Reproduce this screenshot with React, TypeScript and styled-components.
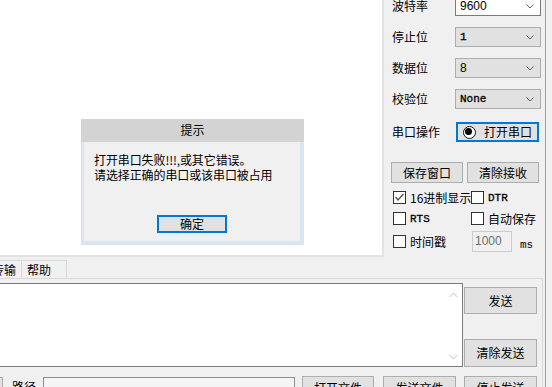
import React from 'react'
import styled, { createGlobalStyle } from 'styled-components'

const GlobalStyle = createGlobalStyle`
  html, body {
    margin: 0;
    padding: 0;
    background: #f0f0f0;
  }
  body {
    font-family: "Noto Sans CJK SC", "Liberation Sans", sans-serif;
    font-size: 12px;
    color: #000;
  }
`

const Chevron: React.FC = () => (
  <svg width="8" height="5" viewBox="0 0 8 5">
    <polyline points="0.5,0.5 4,4 7.5,0.5" fill="none" stroke="#606060" strokeWidth="1" />
  </svg>
)

interface ComboProps {
  value: string
  white?: boolean
  mono?: boolean
}

const Combo: React.FC<ComboProps> = ({ value, white, mono }) => (
  <StyledCombo $white={white}>
    <ComboText $mono={mono}>{value}</ComboText>
    <Chevron />
  </StyledCombo>
)

interface CheckProps {
  label: string
  checked?: boolean
  mono?: boolean
}

const Check: React.FC<CheckProps> = ({ label, checked, mono }) => (
  <StyledCheck>
    <CheckBox>
      {checked && (
        <svg width="11" height="11" viewBox="0 0 11 11">
          <polyline points="1.5,5 4,8 9.5,2" fill="none" stroke="#555" strokeWidth="1.4" />
        </svg>
      )}
    </CheckBox>
    <CheckLabel $mono={mono}>{label}</CheckLabel>
  </StyledCheck>
)

const App: React.FC = () => {
  return (
    <>
      <GlobalStyle />
      <Window>
        <TopSection>
          <ReceiveBox />
          <RightPanel>
            <FieldRow>
              <FieldLabel>波特率</FieldLabel>
              <Combo value="9600" white />
            </FieldRow>
            <FieldRow>
              <FieldLabel>停止位</FieldLabel>
              <Combo value="1" mono />
            </FieldRow>
            <FieldRow>
              <FieldLabel>数据位</FieldLabel>
              <Combo value="8" />
            </FieldRow>
            <FieldRow>
              <FieldLabel>校验位</FieldLabel>
              <Combo value="None" mono />
            </FieldRow>
            <OpRow>
              <FieldLabel $wide>串口操作</FieldLabel>
              <FocusButton $width={83} $height={20}>
                <RadioIcon />
                <span>打开串口</span>
              </FocusButton>
            </OpRow>
            <SaveRow>
              <PlainButton $width={72} $height={21}>保存窗口</PlainButton>
              <PlainButton $width={72} $height={21}>清除接收</PlainButton>
            </SaveRow>
            <CheckRow>
              <CheckCol>
                <Check label="16进制显示" checked />
              </CheckCol>
              <Check label="DTR" mono />
            </CheckRow>
            <CheckRow>
              <CheckCol>
                <Check label="RTS" mono />
              </CheckCol>
              <Check label="自动保存" />
            </CheckRow>
            <CheckRow $last>
              <CheckCol>
                <Check label="时间戳" />
              </CheckCol>
              <IntervalInput>1000</IntervalInput>
              <Unit>ms</Unit>
            </CheckRow>
          </RightPanel>
        </TopSection>

        <TabStrip>
          <Tab $partial>传输</Tab>
          <Tab>帮助</Tab>
        </TabStrip>
        <TabPanel>
          <SendRow>
            <SendBox>
              <ScrollArrows>
                <svg width="9" height="6" viewBox="0 0 9 6">
                  <polyline points="0.5,5 4.5,1 8.5,5" fill="none" stroke="#bdbdbd" strokeWidth="1" />
                </svg>
                <svg width="9" height="6" viewBox="0 0 9 6">
                  <polyline points="0.5,1 4.5,5 8.5,1" fill="none" stroke="#bdbdbd" strokeWidth="1" />
                </svg>
              </ScrollArrows>
            </SendBox>
            <SendButtons>
              <PlainButton $width={73} $height={27}>发送</PlainButton>
              <PlainButton $width={73} $height={28}>清除发送</PlainButton>
            </SendButtons>
          </SendRow>
          <FileRow>
            <PartialButton />
            <PathLabel>路径</PathLabel>
            <PathInput />
            <PlainButton $width={72} $height={24}>打开文件</PlainButton>
            <PlainButton $width={73} $height={24}>发送文件</PlainButton>
            <PlainButton $width={73} $height={24}>停止发送</PlainButton>
          </FileRow>
        </TabPanel>

        <Dialog>
          <DialogTitle>提示</DialogTitle>
          <DialogBody>
            <DialogText>
              <DialogLine>打开串口失败!!!,或其它错误。</DialogLine>
              <DialogLine>请选择正确的串口或该串口被占用</DialogLine>
            </DialogText>
            <FocusButton $width={70} $height={18}>确定</FocusButton>
          </DialogBody>
        </Dialog>
      </Window>
    </>
  )
}

const Window = styled.div`
  position: relative;
  width: 546px;
  height: 387px;
  overflow: hidden;
  box-sizing: border-box;
  background: #f0f0f0;
  border-right: 1px solid #a0a0a0;
`

const TopSection = styled.div`
  display: flex;
  height: 257px;
`

const ReceiveBox = styled.div`
  width: 384px;
  height: 257px;
  box-sizing: border-box;
  background: #fff;
  border-right: 2px solid #e3e3e3;
  border-bottom: 2px solid #e3e3e3;
`

const RightPanel = styled.div`
  display: flex;
  flex-direction: column;
  margin-top: -4px;
  padding-left: 8px;
`

const FieldRow = styled.div`
  display: flex;
  align-items: center;
  height: 20px;
  margin-bottom: 11px;
`

const FieldLabel = styled.div<{ $wide?: boolean }>`
  width: ${(p) => (p.$wide ? 64 : 63)}px;
  line-height: 20px;
`

const StyledCombo = styled.div<{ $white?: boolean }>`
  display: flex;
  align-items: center;
  justify-content: space-between;
  width: 86px;
  height: 20px;
  box-sizing: border-box;
  padding: 0 6px 0 4px;
  background: ${(p) => (p.$white ? '#fff' : '#e1e1e1')};
  border: 1px solid ${(p) => (p.$white ? '#7a7a7a' : '#adadad')};
`

const ComboText = styled.span<{ $mono?: boolean }>`
  font-family: ${(p) =>
    p.$mono ? '"Liberation Mono", monospace' : '"Liberation Sans", "Noto Sans CJK SC", sans-serif'};
  font-size: ${(p) => (p.$mono ? 11 : 12)}px;
  font-weight: normal;
  -webkit-text-stroke: ${(p) => (p.$mono ? '0.3px #000' : '0')};
  line-height: 18px;
`

const OpRow = styled.div`
  display: flex;
  align-items: center;
  height: 20px;
  margin-top: 2px;
`

const FocusButton = styled.div<{ $width: number; $height: number }>`
  display: flex;
  align-items: center;
  justify-content: center;
  gap: 8px;
  width: ${(p) => p.$width}px;
  height: ${(p) => p.$height}px;
  box-sizing: border-box;
  background: #e1e1e1;
  border: 2px solid #0078d7;
  line-height: 14px;
`

const RadioIcon = styled.span`
  position: relative;
  flex: none;
  width: 13px;
  height: 13px;
  box-sizing: border-box;
  border: 1.5px solid #111;
  border-radius: 50%;
  background: #fff;
  &::after {
    content: '';
    position: absolute;
    left: 1.5px;
    top: 1.5px;
    width: 7px;
    height: 7px;
    border-radius: 50%;
    background: #000;
  }
`

const PlainButton = styled.div<{ $width: number; $height: number }>`
  display: flex;
  align-items: center;
  justify-content: center;
  flex: none;
  width: ${(p) => p.$width}px;
  height: ${(p) => p.$height}px;
  box-sizing: border-box;
  background: #e1e1e1;
  border: 1px solid #adadad;
  line-height: 14px;
`

const SaveRow = styled.div`
  display: flex;
  gap: 4px;
  margin-top: 20px;
  margin-left: -1px;
`

const CheckRow = styled.div<{ $last?: boolean }>`
  display: flex;
  align-items: center;
  height: ${(p) => (p.$last ? 21 : 13)}px;
  margin-top: ${(p) => (p.$last ? 6 : 8)}px;
  margin-left: 1px;
`

const CheckCol = styled.div`
  width: 78px;
`

const StyledCheck = styled.div`
  display: flex;
  align-items: center;
  gap: 4px;
  white-space: nowrap;
`

const CheckBox = styled.div`
  display: flex;
  align-items: center;
  justify-content: center;
  width: 13px;
  height: 13px;
  box-sizing: border-box;
  background: #fff;
  border: 1px solid #333;
`

const CheckLabel = styled.span<{ $mono?: boolean }>`
  font-family: ${(p) =>
    p.$mono ? '"Liberation Mono", monospace' : '"Noto Sans CJK SC", "Liberation Sans", sans-serif'};
  font-size: ${(p) => (p.$mono ? 11 : 12)}px;
  font-weight: normal;
  -webkit-text-stroke: ${(p) => (p.$mono ? '0.3px #000' : '0')};
  line-height: 14px;
`

const IntervalInput = styled.div`
  width: 40px;
  height: 21px;
  box-sizing: border-box;
  margin-left: 1px;
  padding-left: 2px;
  border: 1px solid #cccccc;
  background: #f0f0f0;
  color: #6d6d6d;
  font-family: "Liberation Sans", sans-serif;
  font-size: 12px;
  line-height: 19px;
`

const Unit = styled.span`
  margin-left: 8px;
  margin-top: 6px;
  font-family: "Liberation Mono", monospace;
  font-size: 11px;
`

const TabStrip = styled.div`
  display: flex;
  align-items: flex-end;
  height: 21px;
  margin-left: -44px;
`

const Tab = styled.div<{ $partial?: boolean }>`
  width: ${(p) => (p.$partial ? 66 : 46)}px;
  height: 18px;
  box-sizing: border-box;
  padding-left: ${(p) => (p.$partial ? 35 : 5)}px;
  border: 1px solid #d9d9d9;
  border-bottom: none;
  margin-right: -1px;
  font-size: 12px;
  line-height: 17px;
  white-space: nowrap;
  overflow: hidden;
`

const TabPanel = styled.div`
  width: 543px;
  height: 110px;
  box-sizing: border-box;
  border-top: 1px solid #d9d9d9;
  border-right: 1px solid #d9d9d9;
  padding-top: 4px;
`

const SendRow = styled.div`
  display: flex;
`

const SendBox = styled.div`
  display: flex;
  justify-content: flex-end;
  width: 465px;
  height: 84px;
  box-sizing: border-box;
  margin-left: -2px;
  background: #fff;
  border: 1px solid #7a7a7a;
`

const ScrollArrows = styled.div`
  display: flex;
  flex-direction: column;
  justify-content: space-between;
  padding: 8px 4px 6px 0;
`

const SendButtons = styled.div`
  display: flex;
  flex-direction: column;
  justify-content: space-between;
  height: 84px;
  box-sizing: border-box;
  padding-top: 4px;
  margin-left: 1px;
`

const FileRow = styled.div`
  display: flex;
  align-items: flex-start;
  margin-top: 9px;
`

const PartialButton = styled.div`
  width: 20px;
  height: 24px;
  box-sizing: border-box;
  margin-left: -17px;
  margin-top: 1px;
  border: 1px solid #adadad;
  background: #e1e1e1;
`

const PathLabel = styled.span`
  margin-left: 9px;
  margin-top: 4px;
  width: 31px;
  line-height: 14px;
`

const PathInput = styled.div`
  width: 252px;
  height: 24px;
  box-sizing: border-box;
  margin-top: 1px;
  margin-right: 7px;
  border: 1px solid #8f8f8f;
  background: #f4f4f4;

  & + ${PlainButton} {
    margin-right: 9px;
  }
  & + ${PlainButton} + ${PlainButton} {
    margin-right: 8px;
  }
`

const Dialog = styled.div`
  position: absolute;
  left: 81px;
  top: 119px;
  width: 223px;
  height: 126px;
  display: flex;
  flex-direction: column;
`

const DialogTitle = styled.div`
  height: 23px;
  background: #d3d3d3;
  text-align: center;
  line-height: 22px;
  font-size: 12px;
`

const DialogBody = styled.div`
  flex: 1;
  display: flex;
  flex-direction: column;
  align-items: center;
  background: #f0f0f0;
  border: 4px solid #d9e5f2;
  border-top: none;
  border-left-width: 3px;
`

const DialogText = styled.div`
  align-self: stretch;
  display: flex;
  flex-direction: column;
  gap: 1px;
  padding: 11px 0 0 10px;
  height: 61px;
  box-sizing: border-box;
  margin-bottom: 12px;
`

const DialogLine = styled.div`
  height: 14px;
  line-height: 14px;
  font-size: 12px;
  letter-spacing: -0.1px;
  white-space: nowrap;
`

export default App
